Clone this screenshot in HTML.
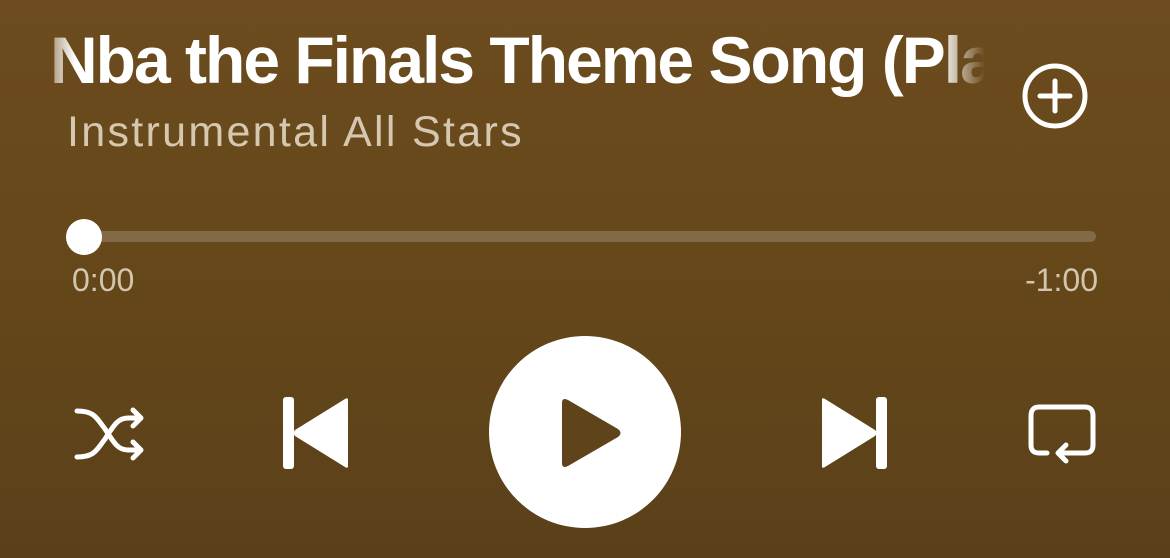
<!DOCTYPE html>
<html><head><meta charset="utf-8"><style>
html,body{margin:0;padding:0}
body{width:1170px;height:558px;overflow:hidden;position:relative;background:linear-gradient(180deg,#6c4c1e 0%,#654719 50%,#5a401a 100%);font-family:"Liberation Sans",sans-serif}
.title{position:absolute;left:50px;top:22px;width:935px;overflow:hidden;white-space:nowrap;color:#fff;font-weight:bold;font-size:66px;letter-spacing:-2px;line-height:76px;
-webkit-mask-image:linear-gradient(90deg,rgba(0,0,0,.4) 0,#000 25px,#000 890px,transparent 935px);mask-image:linear-gradient(90deg,rgba(0,0,0,.4) 0,#000 25px,#000 890px,transparent 935px)}
.artist{position:absolute;left:67px;top:106px;color:#d6c8b0;font-size:43px;letter-spacing:2.3px;line-height:52px;white-space:nowrap}
.bar{position:absolute;left:80px;top:231px;width:1016px;height:11px;border-radius:6px;background:#816a45}
.knob{position:absolute;left:66px;top:219px;width:36px;height:36px;border-radius:50%;background:#fff}
.t{position:absolute;top:261px;color:#d4c6ae;font-size:32px;line-height:38px}
.play{position:absolute;left:489px;top:336px;width:192px;height:192px;border-radius:50%;background:#fff}
svg{position:absolute}
</style></head><body>
<div class="title">Nba the Finals Theme Song (Play</div>
<div class="artist">Instrumental All Stars</div>
<svg style="left:1018px;top:59px" width="74" height="74" viewBox="0 0 74 74"><circle cx="37" cy="37" r="30" fill="none" stroke="#fff" stroke-width="5"/><path d="M37 22V52M22 37H52" stroke="#fff" stroke-width="5" stroke-linecap="round"/></svg>
<div class="bar"></div><div class="knob"></div>
<div class="t" style="left:72px">0:00</div>
<div class="t" style="right:72px">-1:00</div>
<svg style="left:70px;top:400px" width="80" height="68" viewBox="0 0 80 68"><g fill="none" stroke="#fff" stroke-width="5" stroke-linecap="round" stroke-linejoin="round"><path d="M7 11C24 11 26 17 35 29C44 43 48 50 58 50H70"/><path d="M7 57C24 57 26 51 35 39C44 25 48 18 58 18H70"/><path d="M63 10L71 18L63 26"/><path d="M63 42L71 50L63 58"/></g></svg>
<svg style="left:280px;top:395px" width="72" height="76" viewBox="0 0 72 76"><rect x="3" y="2" width="11" height="72" rx="3" fill="#fff"/><path d="M68 5V71Q68 74 65 72L15 41Q12 38 15 35L65 4Q68 2 68 5Z" fill="#fff"/></svg>
<div class="play"></div>
<svg style="left:556px;top:396px" width="70" height="74" viewBox="0 0 70 74"><path d="M6 7Q6 1 12 4L62 33Q67 37 62 41L12 70Q6 73 6 67Z" fill="#5f431a"/></svg>
<svg style="left:818px;top:395px" width="72" height="76" viewBox="0 0 72 76"><rect x="58" y="2" width="11" height="72" rx="3" fill="#fff"/><path d="M4 5V71Q4 74 7 72L57 41Q60 38 57 35L7 4Q4 2 4 5Z" fill="#fff"/></svg>
<svg style="left:1025px;top:398px" width="76" height="72" viewBox="0 0 76 72"><g fill="none" stroke="#fff" stroke-width="5" stroke-linecap="round" stroke-linejoin="round"><path d="M22 55H14Q6 55 6 47V18Q6 9 14 9H60Q68 9 68 18V47Q68 55 60 55H34"/><path d="M41 47L33 55L41 63"/></g></svg>
</body></html>
